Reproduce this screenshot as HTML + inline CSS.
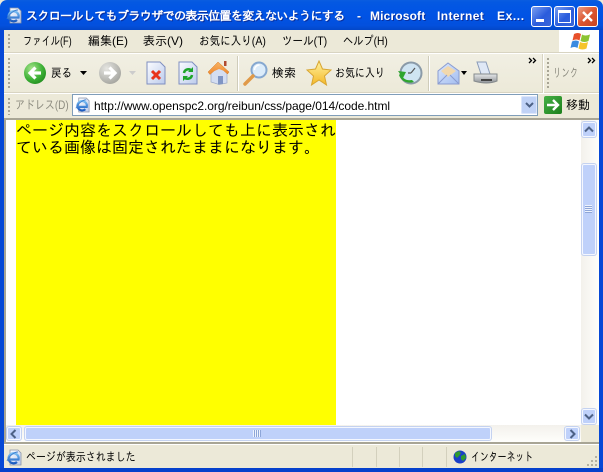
<!DOCTYPE html>
<html lang="ja"><head><meta charset="utf-8">
<style>
html,body{margin:0;padding:0;background:#fff}
#w{position:relative;width:603px;height:472px;overflow:hidden;background:#ece9d8;font-family:"Liberation Sans","IPAGothic","Noto Sans CJK JP",sans-serif;font-size:12px;color:#000}
#w div,#w svg{position:absolute}
.t{white-space:nowrap;line-height:14px;transform-origin:0 0}
.b{color:#fff;font-weight:bold;text-shadow:1px 1px 0 #0a2f9c;top:9px}
.grip{width:2px;background-image:linear-gradient(#a8a595 2px,transparent 2px);background-size:2px 4px}
.sb{background:#bfd1fa;border:1px solid #f4f7ff;border-radius:2px;box-shadow:0 0 0 1px #c4d2f0;box-sizing:border-box}
</style></head><body>
<div id="w">
<div style="left:0;top:0;width:603px;height:30px;background:linear-gradient(#0a5de0 0,#0458e2 8%,#0053e5 50%,#0350dd 85%,#0347c8 100%);border-radius:7px 7px 0 0"></div>
<div style="left:0;top:30px;width:4px;height:442px;background:#0648d6"></div>
<div style="left:599px;top:30px;width:4px;height:442px;background:#0648d6"></div>
<div style="left:0;top:468px;width:603px;height:4px;background:#0541cc"></div>

<svg width="0" height="0" style="left:0;top:0"><defs>
<linearGradient id="pg" x1="0" y1="0" x2="1" y2="1"><stop offset="0" stop-color="#fbfcff"/><stop offset="1" stop-color="#bccbec"/></linearGradient>
<linearGradient id="e" x1="0" y1="0" x2="0" y2="1"><stop offset="0" stop-color="#7cc0f4"/><stop offset="1" stop-color="#1c5cc0"/></linearGradient>
<radialGradient id="g" cx=".35" cy=".3" r=".8"><stop offset="0" stop-color="#a6e48a"/><stop offset=".6" stop-color="#3fb238"/><stop offset="1" stop-color="#1f8a1c"/></radialGradient>
<radialGradient id="h" cx=".35" cy=".3" r=".8"><stop offset="0" stop-color="#e6e6e2"/><stop offset="1" stop-color="#a0a09a"/></radialGradient>
<linearGradient id="st" x1="0" y1="0" x2="0" y2="1"><stop offset="0" stop-color="#fff2a0"/><stop offset="1" stop-color="#f4b828"/></linearGradient>
<linearGradient id="rf" x1="0" y1="0" x2="0" y2="1"><stop offset="0" stop-color="#f8b060"/><stop offset="1" stop-color="#ee8a30"/></linearGradient>
<linearGradient id="pr" x1="0" y1="0" x2="0" y2="1"><stop offset="0" stop-color="#e6e8ea"/><stop offset="1" stop-color="#8e9296"/></linearGradient>
<linearGradient id="ml" x1="0" y1="0" x2="1" y2="1"><stop offset="0" stop-color="#dce8fc"/><stop offset="1" stop-color="#a4bef0"/></linearGradient>
<symbol id="ie" viewBox="0 0 17 17"><path d="M4 1h8l3 3v12H4z" fill="url(#pg)" stroke="#8a94a8" stroke-width=".8"/><path d="M3 10.500h9.500A5 5 0 1 0 11 13" fill="none" stroke="url(#e)" stroke-width="2.300"/><path d="M1 12c2-5 7-9 11-9" fill="none" stroke="#3f7fd0" stroke-width=".9"/></symbol>
</defs></svg>

<svg style="left:6px;top:7px" width="17" height="17"><use href="#ie"/></svg>
<div class="t b" style="left:26px;letter-spacing:-.62px">スクロールしてもブラウザでの表示位置を変えないようにする</div>
<div class="t b" style="left:357px">-</div>
<div class="t b" style="left:370px;letter-spacing:.15px">Microsoft</div>
<div class="t b" style="left:437px;letter-spacing:.4px">Internet</div>
<div class="t b" style="left:497px;letter-spacing:.6px">Ex...</div>

<div style="left:531px;top:6px;width:21px;height:21px;box-sizing:border-box;border:1px solid #fff;border-radius:3px;background:linear-gradient(135deg,#7a9ef0,#2a5cdc 55%,#3a66d8)"></div>
<div style="left:536px;top:19px;width:8px;height:3px;background:#fff"></div>
<div style="left:554px;top:6px;width:21px;height:21px;box-sizing:border-box;border:1px solid #fff;border-radius:3px;background:linear-gradient(135deg,#7a9ef0,#2a5cdc 55%,#3a66d8)"></div>
<div style="left:558px;top:10px;width:13px;height:13px;box-sizing:border-box;border:1px solid #fff;border-top-width:3px"></div>
<div style="left:577px;top:6px;width:21px;height:21px;box-sizing:border-box;border:1px solid #fff;border-radius:3px;background:linear-gradient(135deg,#ea9c84,#dc5530 50%,#c8431f)"></div>
<svg style="left:577px;top:6px" width="21" height="21"><path d="M6 6l9 9M15 6l-9 9" stroke="#fff" stroke-width="2.400"/></svg>

<!-- menu -->
<div style="left:4px;top:30px;width:595px;height:22px;background:#ece9d8"></div>
<div style="left:4px;top:52px;width:595px;height:1px;background:#d8d4c2"></div>
<div style="left:4px;top:53px;width:595px;height:1px;background:#fff"></div>
<div class="grip" style="left:8px;top:34px;height:15px"></div>
<div class="t" style="left:23px;top:34px;transform:scaleX(.77)">ファイル(F)</div>
<div class="t" style="left:88px;top:34px">編集(E)</div>
<div class="t" style="left:143px;top:34px">表示(V)</div>
<div class="t" style="left:199px;top:34px;transform:scaleX(.88)">お気に入り(A)</div>
<div class="t" style="left:282px;top:34px;transform:scaleX(.88)">ツール(T)</div>
<div class="t" style="left:343px;top:34px;transform:scaleX(.85)">ヘルプ(H)</div>
<div style="left:559px;top:30px;width:40px;height:22px;background:#fff"></div>
<svg style="left:570px;top:31px" width="21" height="20" viewBox="0 0 21 20"><path d="M4 3q4-2 7 0l-1.500 6.500q-3-2-7 0z" fill="#e8502a"/><path d="M12 3.500q3 2 8 0l-1.500 6.500q-4 2-8 0z" fill="#8cc432"/><path d="M2 10.500q4-2 7 0L7.500 17q-3-2-7 0z" fill="#3a8ae0"/><path d="M10 11q4 2 8 0l-1.500 6.500q-4 2-8 0z" fill="#f6c42a"/></svg>

<!-- toolbar -->
<div style="left:4px;top:54px;width:595px;height:39px;background:linear-gradient(#f1efe3,#ece9d8)"></div>
<div style="left:4px;top:92px;width:595px;height:1px;background:#d8d4c2"></div>
<div style="left:4px;top:93px;width:595px;height:1px;background:#fff"></div>
<div class="grip" style="left:8px;top:58px;height:32px"></div>
<svg style="left:23px;top:61px" width="24" height="24" viewBox="0 0 24 24"><circle cx="12" cy="12" r="11" fill="url(#g)"/><path d="M18 12H8M12.500 6.500L7 12l5.500 5.500" fill="none" stroke="#fff" stroke-width="3.200"/></svg>
<div class="t" style="left:51px;top:66px;transform:scaleX(.88)">戻る</div>
<svg style="left:80px;top:71px" width="7" height="4"><path d="M0 0h7L3.500 4z" fill="#000"/></svg>
<svg style="left:98px;top:61px" width="24" height="24" viewBox="0 0 24 24"><circle cx="12" cy="12" r="11" fill="url(#h)"/><path d="M6 12h10M11.500 6.500L17 12l-5.500 5.500" fill="none" stroke="#fff" stroke-width="3.200"/></svg>
<svg style="left:129px;top:71px" width="7" height="4"><path d="M0 0h7L3.500 4z" fill="#ccc"/></svg>
<svg style="left:146px;top:61px" width="20" height="24" viewBox="0 0 20 24"><path d="M1 1h13l5 5v17H1z" fill="url(#pg)" stroke="#7f8fc0"/><path d="M6 10l8 8M14 10l-8 8" stroke="#e8341c" stroke-width="3"/></svg>
<svg style="left:178px;top:61px" width="20" height="24" viewBox="0 0 20 24"><path d="M1 1h13l5 5v17H1z" fill="url(#pg)" stroke="#7f8fc0"/><path d="M6 12a4.500 4.500 0 0 1 8-2M14 14a4.500 4.500 0 0 1-8 2" fill="none" stroke="#1ea52a" stroke-width="2.500"/><path d="M15 6v5h-5zM5 20v-5h5z" fill="#1ea52a"/></svg>
<svg style="left:207px;top:59px" width="24" height="26" viewBox="0 0 24 26"><path d="M4 12l8-6 8 6v12l-8 1.500L4 23z" fill="#d4def2" stroke="#9aa8c8" stroke-width=".7"/><path d="M1 13L11 3l11 10-1.500 2L12 7.500 3 15.500z" fill="url(#rf)" stroke="#d87d28" stroke-width=".5"/><path d="M3 14L12 5l8 8-8-3z" fill="url(#rf)"/><path d="M11 17h5v8l-5 .5z" fill="#7f95c4"/><rect x="17" y="2" width="2.500" height="5" fill="#b04a30"/></svg>
<div style="left:237px;top:56px;width:1px;height:35px;background:#cfccba"></div>
<div style="left:238px;top:56px;width:1px;height:35px;background:#fff"></div>
<svg style="left:243px;top:61px" width="26" height="25" viewBox="0 0 26 25"><circle cx="16" cy="9" r="7.500" fill="#dcecfa" stroke="#86a8d0" stroke-width="2"/><path d="M11.500 9a5 5 0 0 1 5-5" fill="none" stroke="#fff" stroke-width="1.500"/><path d="M10 15L2 23" stroke="#e09a48" stroke-width="3.500" stroke-linecap="round"/></svg>
<div class="t" style="left:272px;top:66px">検索</div>
<svg style="left:306px;top:60px" width="26" height="26" viewBox="0 0 26 26"><path d="M13 1l3.500 8 8.500 1-6.500 6 2 9-7.500-5-7.500 5 2-9L1 10l8.500-1z" fill="url(#st)" stroke="#d8a530"/></svg>
<div class="t" style="left:335px;top:66px;transform:scaleX(.83)">お気に入り</div>
<svg style="left:398px;top:61px" width="25" height="24" viewBox="0 0 25 24"><circle cx="13" cy="12" r="10.500" fill="#cfe4f2" stroke="#8a9aa8" stroke-width="2"/><path d="M13 12l4-5M13 12h-3" stroke="#555" stroke-width="1.200"/><path d="M3 12c1 6 6 8 11 7l2 2c-7 2-13-1-15-7z" fill="#2ea52e"/><path d="M0 10l8 1-3 6z" fill="#2ea52e"/></svg>
<div style="left:428px;top:56px;width:1px;height:35px;background:#cfccba"></div>
<div style="left:429px;top:56px;width:1px;height:35px;background:#fff"></div>
<svg style="left:437px;top:62px" width="23" height="23" viewBox="0 0 23 23"><path d="M1 9L11 1l11 8v13H1z" fill="url(#ml)" stroke="#8a9cd0"/><path d="M4 9l7-5 8 5-8 6z" fill="#f2d8ac"/><path d="M1 22l9-9M22 22l-9-9" stroke="#8a9cd0"/></svg>
<svg style="left:461px;top:71px" width="6" height="4"><path d="M0 0h6L3 4z" fill="#000"/></svg>
<svg style="left:473px;top:61px" width="25" height="25" viewBox="0 0 25 25"><path d="M4 1h9l4 12H8z" fill="#dfe8f6" stroke="#8b9cb8"/><path d="M1 13h23v7q-10 4-23 0z" fill="url(#pr)" stroke="#858a8c"/><path d="M8 19h11" stroke="#444" stroke-width="2"/></svg>
<svg style="left:528px;top:57px" width="9" height="7"><path d="M1 1l2.500 2.500L1 6M5 1l2.500 2.500L5 6" fill="none" stroke="#000" stroke-width="1.300"/></svg>
<div style="left:543px;top:54px;width:1px;height:39px;background:#fff"></div>
<div style="left:542px;top:54px;width:1px;height:39px;background:#d8d4c2"></div>
<div class="grip" style="left:547px;top:58px;height:32px"></div>
<div class="t" style="left:553px;top:66px;color:#8d8c80;transform:scaleX(.7)">リンク</div>
<svg style="left:587px;top:57px" width="9" height="7"><path d="M1 1l2.500 2.500L1 6M5 1l2.500 2.500L5 6" fill="none" stroke="#000" stroke-width="1.300"/></svg>

<!-- address -->
<div style="left:4px;top:94px;width:595px;height:25px;background:#ece9d8"></div>
<div class="grip" style="left:8px;top:98px;height:17px"></div>
<div class="t" style="left:15px;top:98px;color:#8d8c80;transform:scaleX(.83)">アドレス(D)</div>
<div style="left:72px;top:94px;width:466px;height:22px;box-sizing:border-box;background:#fff;border:1px solid #7f9db9"></div>
<svg style="left:75px;top:97px" width="16" height="16"><use href="#ie"/></svg>
<div class="t" style="left:94px;top:99px;letter-spacing:-.04px">http://www.openspc2.org/reibun/css/page/014/code.html</div>
<div style="left:521px;top:96px;width:16px;height:18px;background:#c0d2f6;border-radius:2px;box-shadow:inset 0 0 0 1px #dce6fb"></div>
<svg style="left:525px;top:102px" width="9" height="7"><path d="M1 1l3.500 3.500L8 1" fill="none" stroke="#4d6185" stroke-width="2"/></svg>
<div style="left:544px;top:96px;width:18px;height:18px;border-radius:2px;background:linear-gradient(135deg,#46b046,#1b7f1b)"></div>
<svg style="left:544px;top:96px" width="18" height="18"><path d="M3 9h10M9 4l5 5-5 5" fill="none" stroke="#fff" stroke-width="2.400"/></svg>
<div class="t" style="left:566px;top:98px">移動</div>

<!-- content -->
<div style="left:4px;top:118px;width:595px;height:2px;background:#a8a595"></div>
<div style="left:4px;top:120px;width:2px;height:324px;background:#a8a595"></div>
<div style="left:6px;top:120px;width:575px;height:305px;background:#fff"></div>
<div style="left:16px;top:120px;padding-top:2px;width:320px;height:303px;background:#ff0;font-size:16px;line-height:17px;font-family:'IPAGothic','Noto Sans CJK JP',sans-serif;word-break:break-all">ページ内容をスクロールしても上に表示されている画像は固定されたままになります。</div>

<!-- v scroll -->
<div style="left:581px;top:120px;width:18px;height:305px;background:linear-gradient(90deg,#f3f1ec,#fefefb)"></div>
<div class="sb" style="left:582px;top:122px;width:14px;height:15px"></div>
<svg style="left:584px;top:126px" width="10" height="7"><path d="M1 5.500l4-4 4 4" fill="none" stroke="#4d6185" stroke-width="2"/></svg>
<div class="sb" style="left:582px;top:164px;width:14px;height:91px"></div>
<div style="left:585px;top:205px;width:7px;height:8px;background:repeating-linear-gradient(#eef3fd 0,#eef3fd 1px,#8ea6d8 1px,#8ea6d8 2px)"></div>
<div class="sb" style="left:582px;top:409px;width:14px;height:15px"></div>
<svg style="left:584px;top:413px" width="10" height="7"><path d="M1 1.500l4 4 4-4" fill="none" stroke="#4d6185" stroke-width="2"/></svg>

<!-- h scroll -->
<div style="left:6px;top:425px;width:575px;height:17px;background:linear-gradient(#f3f1ec,#fefefb)"></div>
<div style="left:581px;top:425px;width:18px;height:17px;background:#ece9d8"></div>
<div class="sb" style="left:7px;top:427px;width:14px;height:13px"></div>
<svg style="left:10px;top:429px" width="7" height="10"><path d="M5.500 1l-4 4 4 4" fill="none" stroke="#4d6185" stroke-width="2"/></svg>
<div class="sb" style="left:25px;top:427px;width:466px;height:13px"></div>
<div style="left:253px;top:430px;width:8px;height:7px;background:repeating-linear-gradient(90deg,#eef3fd 0,#eef3fd 1px,#8ea6d8 1px,#8ea6d8 2px)"></div>
<div class="sb" style="left:565px;top:427px;width:14px;height:13px"></div>
<svg style="left:569px;top:429px" width="7" height="10"><path d="M1.500 1l4 4-4 4" fill="none" stroke="#4d6185" stroke-width="2"/></svg>

<!-- status -->
<div style="left:4px;top:442px;width:595px;height:2px;background:#a8a595"></div>
<div style="left:4px;top:444px;width:595px;height:1px;background:#fff"></div>
<div style="left:4px;top:445px;width:595px;height:23px;background:#ece9d8"></div>
<svg style="left:6px;top:449px" width="17" height="17"><use href="#ie"/></svg>
<div class="t" style="left:26px;top:450px;transform:scaleX(.83)">ページが表示されました</div>
<div style="left:352px;top:447px;width:1px;height:20px;background:#d3d0bd"></div>
<div style="left:376px;top:447px;width:1px;height:20px;background:#d3d0bd"></div>
<div style="left:399px;top:447px;width:1px;height:20px;background:#d3d0bd"></div>
<div style="left:422px;top:447px;width:1px;height:20px;background:#d3d0bd"></div>
<div style="left:446px;top:447px;width:1px;height:20px;background:#d3d0bd"></div>
<svg style="left:453px;top:450px" width="14" height="14" viewBox="0 0 14 14"><circle cx="7" cy="7" r="6.500" fill="#1a3fc8"/><path d="M2 3l4-2 2 2-2 3-2 2-2-2zM8 6l4-2 1 4-3 3-2-2z" fill="#2f9a2f"/></svg>
<div class="t" style="left:471px;top:450px;transform:scaleX(.74)">インターネット</div>
<svg style="left:587px;top:456px" width="11" height="11"><g fill="#b5b2a2"><rect x="8" y="0" width="2" height="2"/><rect x="4" y="4" width="2" height="2"/><rect x="8" y="4" width="2" height="2"/><rect x="0" y="8" width="2" height="2"/><rect x="4" y="8" width="2" height="2"/><rect x="8" y="8" width="2" height="2"/></g></svg>
</div>
</body></html>
